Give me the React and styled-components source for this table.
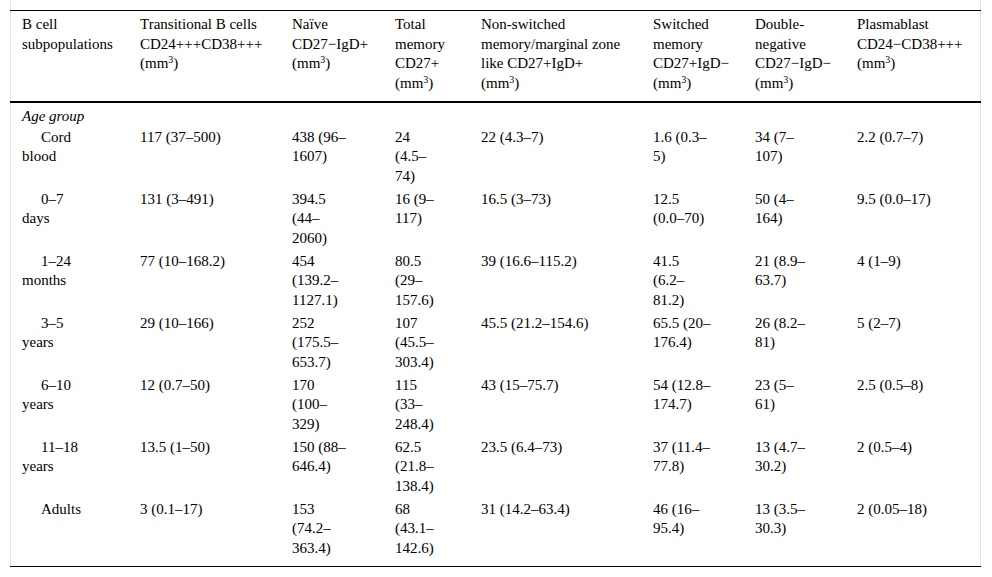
import React from "react";
import styled, { createGlobalStyle } from "styled-components";

const GlobalStyle = createGlobalStyle`
  html, body {
    margin: 0;
    padding: 0;
    background: #ffffff;
  }
  body {
    font-family: "Liberation Serif", "Times New Roman", serif;
    color: #000000;
  }
`;

const columns = [118, 152, 103, 86, 172, 102, 102, 136];

const headers = [
  ["B cell", "subpopulations"],
  ["Transitional B cells", "CD24+++CD38+++", "(mm³)"],
  ["Naïve", "CD27−IgD+", "(mm³)"],
  ["Total", "memory", "CD27+", "(mm³)"],
  ["Non-switched", "memory/marginal zone", "like CD27+IgD+", "(mm³)"],
  ["Switched", "memory", "CD27+IgD−", "(mm³)"],
  ["Double-", "negative", "CD27−IgD−", "(mm³)"],
  ["Plasmablast", "CD24−CD38+++", "(mm³)"],
];

const rows = [
  [
    ["Cord", "blood"],
    ["117 (37–500)"],
    ["438 (96–", "1607)"],
    ["24", "(4.5–", "74)"],
    ["22 (4.3–7)"],
    ["1.6 (0.3–", "5)"],
    ["34 (7–", "107)"],
    ["2.2 (0.7–7)"],
  ],
  [
    ["0–7", "days"],
    ["131 (3–491)"],
    ["394.5", "(44–", "2060)"],
    ["16 (9–", "117)"],
    ["16.5 (3–73)"],
    ["12.5", "(0.0–70)"],
    ["50 (4–", "164)"],
    ["9.5 (0.0–17)"],
  ],
  [
    ["1–24", "months"],
    ["77 (10–168.2)"],
    ["454", "(139.2–", "1127.1)"],
    ["80.5", "(29–", "157.6)"],
    ["39 (16.6–115.2)"],
    ["41.5", "(6.2–", "81.2)"],
    ["21 (8.9–", "63.7)"],
    ["4 (1–9)"],
  ],
  [
    ["3–5", "years"],
    ["29 (10–166)"],
    ["252", "(175.5–", "653.7)"],
    ["107", "(45.5–", "303.4)"],
    ["45.5 (21.2–154.6)"],
    ["65.5 (20–", "176.4)"],
    ["26 (8.2–", "81)"],
    ["5 (2–7)"],
  ],
  [
    ["6–10", "years"],
    ["12 (0.7–50)"],
    ["170", "(100–", "329)"],
    ["115", "(33–", "248.4)"],
    ["43 (15–75.7)"],
    ["54 (12.8–", "174.7)"],
    ["23 (5–", "61)"],
    ["2.5 (0.5–8)"],
  ],
  [
    ["11–18", "years"],
    ["13.5 (1–50)"],
    ["150 (88–", "646.4)"],
    ["62.5", "(21.8–", "138.4)"],
    ["23.5 (6.4–73)"],
    ["37 (11.4–", "77.8)"],
    ["13 (4.7–", "30.2)"],
    ["2 (0.5–4)"],
  ],
  [
    ["Adults"],
    ["3 (0.1–17)"],
    ["153", "(74.2–", "363.4)"],
    ["68", "(43.1–", "142.6)"],
    ["31 (14.2–63.4)"],
    ["46 (16–", "95.4)"],
    ["13 (3.5–", "30.3)"],
    ["2 (0.05–18)"],
  ],
];

function Lines({ lines }) {
  return lines.map((l, i) => <Line key={i}>{renderSup(l)}</Line>);
}

// turn "(mm³)" into mm with a real superscript 3
function renderSup(text) {
  if (!text.includes("³")) return text;
  const [a, b] = text.split("³");
  return (
    <>
      {a}
      <Sup>3</Sup>
      {b}
    </>
  );
}

export default function App() {
  return (
    <>
      <GlobalStyle />
      <Frame>
        <Table>
          <colgroup>
            {columns.map((w, i) => (
              <col key={i} style={{ width: w }} />
            ))}
          </colgroup>
          <thead>
            <tr>
              {headers.map((h, i) => (
                <HeadCell key={i}>
                  <Lines lines={h} />
                </HeadCell>
              ))}
            </tr>
          </thead>
          <tbody>
            <tr>
              <GroupCell colSpan={8}>Age group</GroupCell>
            </tr>
            {rows.map((r, ri) => (
              <BodyRow key={ri}>
                {r.map((cell, ci) => (
                  <BodyCell key={ci} $label={ci === 0}>
                    <Lines lines={cell} />
                  </BodyCell>
                ))}
              </BodyRow>
            ))}
          </tbody>
        </Table>
      </Frame>
    </>
  );
}

const Frame = styled.div`
  margin-left: 10px;
  width: 971px;
  box-sizing: border-box;
  padding-top: 10px;
  border-left: 1px solid #e4e4e4;
  border-right: 1px solid #e4e4e4;
`;

const Table = styled.table`
  width: calc(100% + 2px);
  margin-left: -1px;
  border-collapse: collapse;
  table-layout: fixed;
  font-size: 15px;
  line-height: 19.5px;
  border-top: 1px solid #000;
  border-bottom: 1.5px solid #000;
`;

const HeadCell = styled.th`
  text-align: left;
  font-weight: normal;
  vertical-align: top;
  padding: 4px 0 8px 12px;
  border-bottom: 2px solid #000;
`;

const GroupCell = styled.td`
  font-style: italic;
  padding: 4px 0 1px 12px;
`;

const BodyRow = styled.tr`
  &:last-child td {
    padding-bottom: 7.5px;
  }
`;

const BodyCell = styled.td`
  vertical-align: top;
  padding: 0 0 3.5px 12px;

  & > span:first-child {
    padding-left: ${(p) => (p.$label ? "19px" : "0")};
  }
`;

const Line = styled.span`
  display: block;
  white-space: nowrap;
`;

const Sup = styled.sup`
  font-size: 10px;
  line-height: 0;
  vertical-align: 5px;
`;
